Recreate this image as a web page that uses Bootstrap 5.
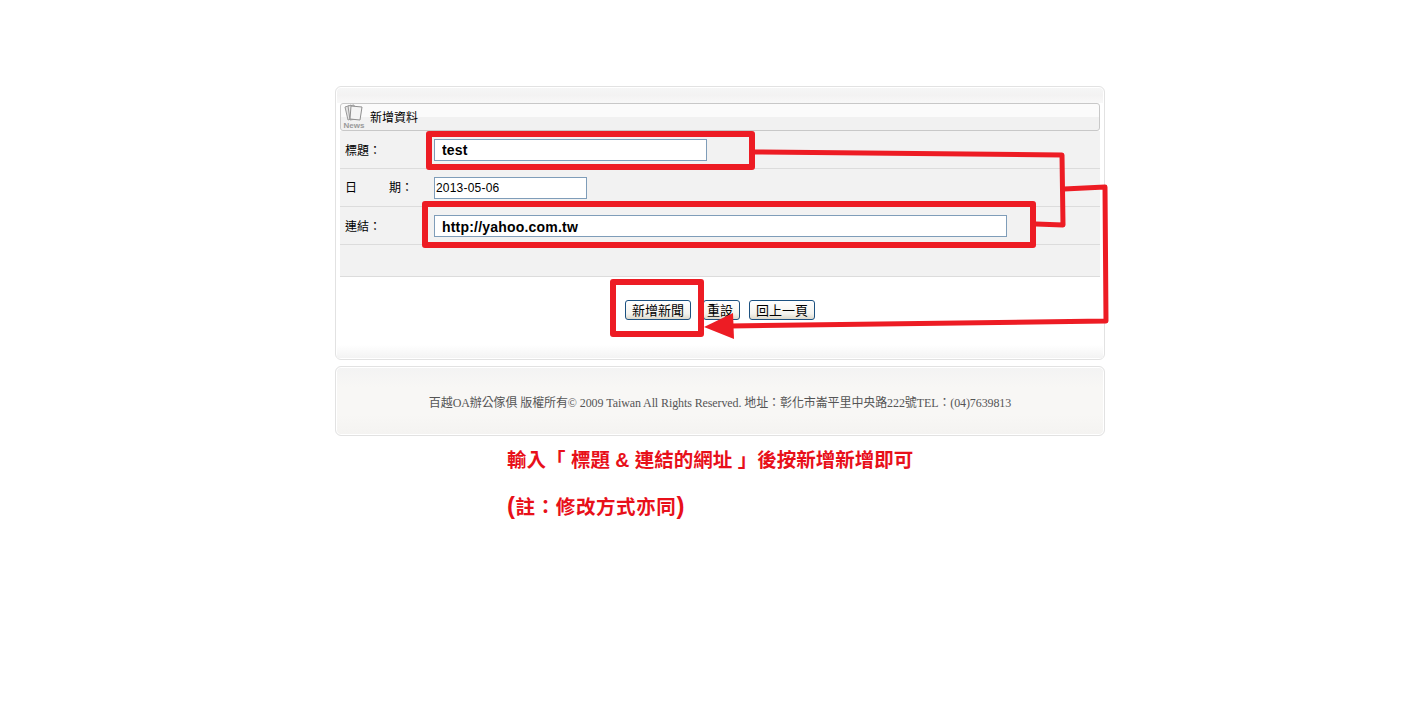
<!DOCTYPE html>
<html lang="zh-Hant">
<head>
    <meta charset="UTF-8">
    <meta name="viewport" content="width=device-width, initial-scale=1.0">
    <title>新增資料</title>
    <link href="https://cdn.jsdelivr.net/npm/bootstrap@5.3.0/dist/css/bootstrap.min.css" rel="stylesheet">
    <style>
        body {
            background: #fff;
            color: #000;
            font-family: "Liberation Sans", "Noto Sans CJK TC", sans-serif;
            font-size: 12px;
        }
        .page-wrap {
            width: 770px;
            margin: 86px 0 0 335px;
        }
        .main-panel {
            height: 274px;
            padding: 16px 4px 0;
            border: 1px solid #e2e2e2;
            border-radius: 6px;
            box-shadow: inset 0 0 0 1px #fff;
            background: linear-gradient(#f6f6f6, #f3f2f2 8px, #f8f8f8 16px, #fff 16px);
        }
        .panel-body-area {
            height: 256px;
        }
        .title-bar {
            height: 28px;
            padding-left: 2px;
            border: 1px solid #c8c8c8;
            border-radius: 3px;
            background: linear-gradient(#fbfbfb 50%, #f1f1f1 50%);
        }
        .news-icon {
            width: 22px;
            color: #999;
            font-size: 8px;
            font-weight: bold;
            line-height: 8px;
            text-align: center;
        }
        .news-icon svg {
            display: block;
            margin: 0 auto;
        }
        .title-text {
            margin-left: 5px;
            padding-top: 2px;
        }
        .field-row {
            height: 38px;
            padding-left: 5px;
            background: #f2f2f2;
            border-bottom: 1px solid #dcdcdc;
        }
        .field-label {
            width: 89px;
            flex: none;
            padding-top: 2px;
        }
        .label-date {
            padding-top: 0;
        }
        .label-gap {
            margin-left: 32px;
        }
        .field-input.form-control {
            height: 22px;
            padding: 0 0 0 1px;
            border: 1px solid #7f9db9;
            border-radius: 0;
            color: #000;
            font-size: 12px;
            letter-spacing: .2px;
            line-height: 20px;
        }
        .field-input.marked-input {
            padding-left: 7px;
            font-size: 14px;
            font-weight: bold;
            letter-spacing: .2px;
        }
        .field-input.w-link {
            padding-top: 2px;
        }
        .w-title { width: 273px; }
        .w-date { width: 153px; }
        .w-link { width: 573px; }
        .spacer-row {
            height: 32px;
        }
        .button-row {
            padding-top: 23px;
        }
        .form-btn.btn {
            height: 20px;
            padding: 1px 0 0;
            border: 1px solid #1c5180;
            border-radius: 3px;
            background: linear-gradient(#fff, #f4f3ee 70%, #dcd9cc);
            color: #000;
            font-size: 13px;
            line-height: 18px;
        }
        .btn-add { width: 66px; margin-right: 12px; }
        .form-btn.btn-reset { width: 37px; margin-right: 9px; padding-right: 3px; }
        .btn-back { width: 66px; }
        .panel-fade {
            height: 13px;
            margin: 25px -3px 0;
            background: linear-gradient(#fff, #f3f3f3);
        }
        .foot-panel {
            height: 70px;
            margin-top: 6px;
            padding-top: 4px;
            border: 1px solid #e2e2e2;
            border-radius: 6px;
            box-shadow: inset 0 0 0 1px #fff;
            background: linear-gradient(#f3f3f3, #f8f7f5 30%, #f8f7f5 70%, #f4f3f1);
            color: #555;
            font-family: "Liberation Serif", "Noto Sans CJK TC", serif;
            letter-spacing: -.1px;
        }
        .note-text {
            padding-left: 172px;
            color: #e8101a;
            font-family: "Liberation Sans", "Noto Sans CJK TC", sans-serif;
            font-size: 19.5px;
            font-weight: bold;
        }
        .note-text p {
            height: 47px;
            margin: 0;
            line-height: 48px;
            white-space: pre;
        }
        .note-text .note-second {
            letter-spacing: .6px;
        }
        .note-paren {
            font-size: 24px;
            line-height: 0;
        }
        .markup-layer {
            position: absolute;
            top: 0;
            left: 0;
            pointer-events: none;
        }
    </style>
</head>
<body>
    <div class="page-wrap">
        <div class="main-panel">
            <div class="title-bar d-flex align-items-center">
                <div class="news-icon">
                    <svg width="20" height="18" viewBox="0 0 20 18">
                        <path d="M1 3 L7 1 L10 14 L4 16 Z" fill="#e4e4e4" stroke="#9a9a9a" stroke-width="1"/>
                        <path d="M4 2 L10 1 L12 15 L6 16 Z" fill="#eee" stroke="#9a9a9a" stroke-width="1"/>
                        <path d="M7 2 L18 3 L16 16 L6 15 Z" fill="#f4f4f4" stroke="#8f8f8f" stroke-width="1"/>
                    </svg>
                    News
                </div>
                <span class="title-text">新增資料</span>
            </div>
            <div class="panel-body-area">
                <div class="field-row d-flex align-items-center">
                    <div class="field-label">標題：</div>
                    <input class="field-input marked-input form-control w-title" type="text" value="test">
                </div>
                <div class="field-row d-flex align-items-center">
                    <div class="field-label label-date">日<span class="label-gap">期：</span></div>
                    <input class="field-input form-control w-date" type="text" value="2013-05-06">
                </div>
                <div class="field-row d-flex align-items-center">
                    <div class="field-label">連結：</div>
                    <input class="field-input marked-input form-control w-link" type="text" value="http://yahoo.com.tw">
                </div>
                <div class="field-row spacer-row"></div>
                <div class="button-row d-flex justify-content-center">
                    <button class="form-btn btn-add btn" type="button">新增新聞</button>
                    <button class="form-btn btn-reset btn" type="button">重設</button>
                    <button class="form-btn btn-back btn" type="button">回上一頁</button>
                </div>
                <div class="panel-fade"></div>
            </div>
        </div>
        <div class="foot-panel d-flex align-items-center justify-content-center">
            百越OA辦公傢俱 版權所有© 2009 Taiwan All Rights Reserved. 地址：彰化市崙平里中央路222號TEL：(04)7639813
        </div>
        <div class="note-text">
            <p>輸入「 標題 &amp; 連結的網址 」後按新增新增即可</p>
            <p class="note-second"><span class="note-paren">(</span>註：修改方式亦同<span class="note-paren">)</span></p>
        </div>
    </div>

    <!-- red markup drawn on top of the screenshot -->
    <svg class="markup-layer" width="1423" height="721" viewBox="0 0 1423 721">
        <g fill="none" stroke="#ed1c24" stroke-linejoin="round" stroke-linecap="round">
            <rect x="429" y="134" width="323" height="33" stroke-width="6"/>
            <rect x="425" y="204" width="608" height="41" stroke-width="6"/>
            <rect x="613" y="282" width="88" height="52" stroke-width="6"/>
            <path d="M755 152 L1062 155 L1063 225 L1036 224" stroke-width="5"/>
            <path d="M1064 189 L1105 187 L1106 321 L730 326" stroke-width="5"/>
        </g>
        <path d="M704 327 L733 313 L734 339 Z" fill="#ed1c24"/>
    </svg>
</body>
</html>
